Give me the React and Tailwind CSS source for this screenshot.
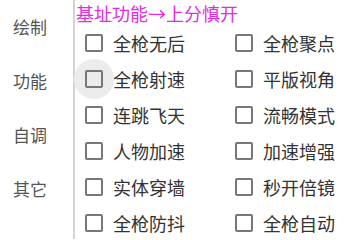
const SIDE = ['绘制', '功能', '自调', '其它']

const OPTIONS = [
  ['全枪无后', '全枪聚点'],
  ['全枪射速', '平版视角'],
  ['连跳飞天', '流畅模式'],
  ['人物加速', '加速增强'],
  ['实体穿墙', '秒开倍镜'],
  ['全枪防抖', '全枪自动'],
]

function Check({ label, pressed }) {
  return (
    <div className="flex items-center h-[36px]">
      <div className="relative w-[18px] h-[18px] shrink-0">
        {pressed && (
          <span className="absolute left-[-11px] top-[-11px] w-[40px] h-[40px] rounded-full bg-[#ececec]" />
        )}
        <span className="absolute inset-0 border-2 border-[#777] rounded-[2px]" />
      </div>
      <span className="ml-[10px] text-[18px] leading-none text-[#333]">{label}</span>
    </div>
  )
}

export default function App() {
  return (
    <div
      className="flex w-[353px] h-[239px] bg-white overflow-hidden"
      style={{ fontFamily: '"Noto Sans CJK SC", "Noto Sans", sans-serif' }}
    >
      <aside className="w-[73px] shrink-0 flex flex-col">
        {SIDE.map((s) => (
          <div key={s} className="h-[54px] flex items-center pl-[13px] text-[17px] text-[#555]">
            {s}
          </div>
        ))}
      </aside>

      <main className="flex-1 border-l-2 border-[#d4d4d4] flex flex-col">
        <div className="h-[25px] pt-[1px] pl-[1px] text-[18px] leading-[24px] text-[#e22be2]">
          基址功能→上分慎开
        </div>
        <div className="grid grid-cols-[150px_150px] pl-[10px]">
          {OPTIONS.map(([a, b], i) => [
            <Check key={a} label={a} pressed={i === 1} />,
            <Check key={b} label={b} />,
          ])}
        </div>
      </main>
    </div>
  )
}
